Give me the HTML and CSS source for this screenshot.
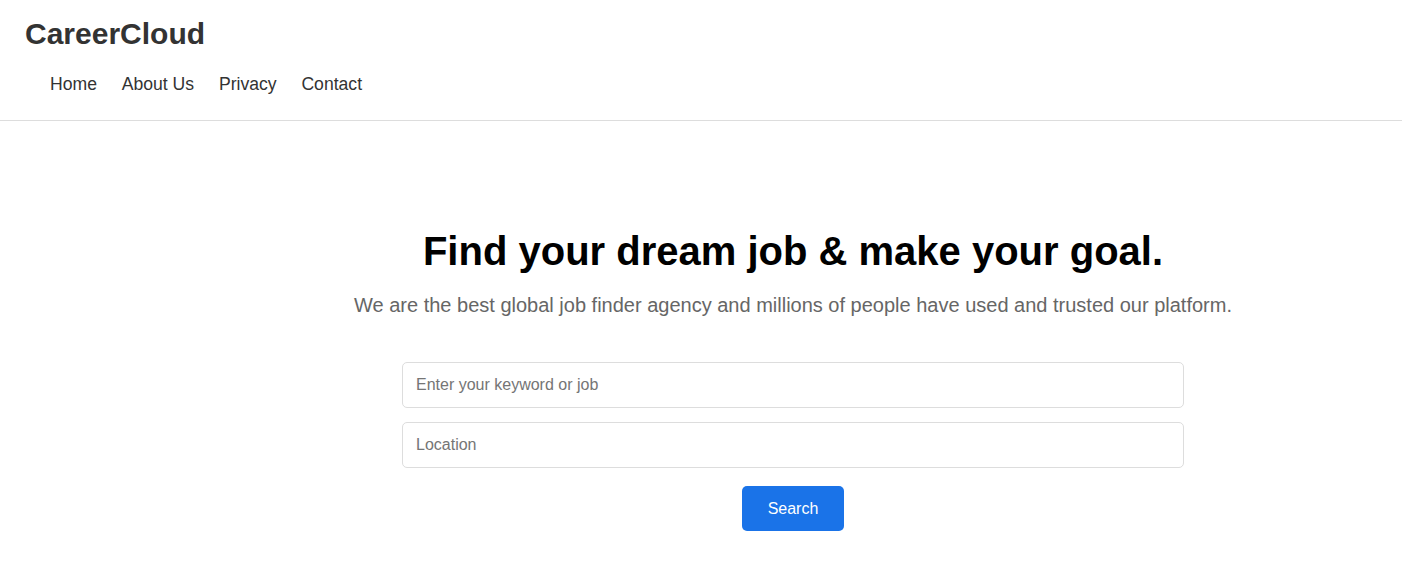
FILE: index.html
```html
<!DOCTYPE html>
<html lang="en">
<head>
<meta charset="utf-8">
<title>CareerCloud</title>
<link rel="stylesheet" href="styles.css">
</head>
<body>
<header class="site-header">
  <div class="logo">CareerCloud</div>
  <nav class="nav">
    <a href="#">Home</a>
    <a href="#">About Us</a>
    <a href="#">Privacy</a>
    <a href="#">Contact</a>
  </nav>
</header>
<main class="hero">
  <h1 class="hero-title">Find your dream job &amp; make your goal.</h1>
  <p class="hero-sub">We are the best global job finder agency and millions of people have used and trusted our platform.</p>
  <form class="search-form">
    <input class="field" type="text" placeholder="Enter your keyword or job">
    <input class="field" type="text" placeholder="Location">
    <button class="btn" type="button">Search</button>
  </form>
</main>
</body>
</html>
```

FILE: styles.css
```css
* { box-sizing: border-box; }
html, body { margin: 0; padding: 0; background: #fff; }
body { font-family: "Liberation Sans", Arial, sans-serif; color: #333; }

.site-header {
  padding: 16px 25px 25px;
  border-bottom: 1px solid #ddd;
}
.logo {
  font-size: 30px;
  line-height: 36px;
  font-weight: bold;
  color: #333;
}
.nav {
  display: flex;
  gap: 24.8px;
  margin-top: 22px;
  padding-left: 25px;
}
.nav a {
  font-size: 17.6px;
  line-height: 21px;
  color: #333;
  text-decoration: none;
}

.hero {
  display: flex;
  flex-direction: column;
  align-items: center;
  padding: 106px 0 40px 184px;
}
.hero-title {
  margin: 0;
  font-size: 40px;
  line-height: 48px;
  font-weight: bold;
  color: #000;
}
.hero-sub {
  margin: 18px 0 0;
  font-size: 20px;
  line-height: 24px;
  color: #666;
}
.search-form {
  display: flex;
  flex-direction: column;
  align-items: center;
  gap: 14px;
  margin-top: 45px;
  width: 782px;
}
.field {
  width: 100%;
  height: 46px;
  padding: 0 13px;
  border: 1px solid #ddd;
  border-radius: 5px;
  font-family: "Liberation Sans", Arial, sans-serif;
  font-size: 16px;
  color: #333;
  outline: none;
}
.field::placeholder { color: #757575; }
.btn {
  margin-top: 4px;
  height: 45px;
  padding: 0 26px;
  background: #1a73e8;
  color: #fff;
  border: none;
  border-radius: 5px;
  font-family: "Liberation Sans", Arial, sans-serif;
  font-size: 16px;
  cursor: pointer;
}
```
